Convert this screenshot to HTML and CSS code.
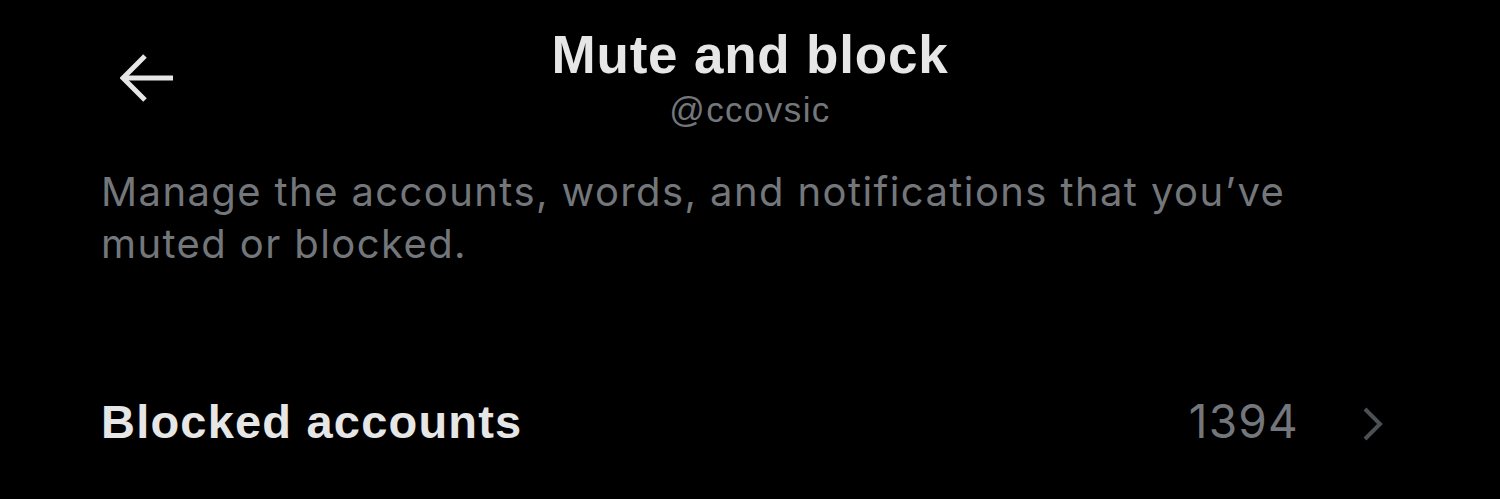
FILE: index.html
```html
<!DOCTYPE html>
<html lang="en">
<head>
<meta charset="utf-8">
<title>Mute and block</title>
<link rel="stylesheet" href="styles.css">
</head>
<body>
<div class="screen">
  <header class="topbar">
    <button class="back" aria-label="Back">
      <svg width="54" height="48" viewBox="0 0 54 48" fill="none" stroke="#e6e6e6" stroke-width="5" stroke-linejoin="miter">
        <path d="M25 2 L3 24 L25 46"/>
        <path d="M4 24 H53"/>
      </svg>
    </button>
    <div class="heading">
      <h1 class="title">Mute and block</h1>
      <div class="handle">@ccovsic</div>
    </div>
    <div class="spacer"></div>
  </header>

  <p class="intro">Manage the accounts, words, and notifications that you’ve muted or blocked.</p>

  <ul class="settings">
    <li class="row">
      <span class="row-label">Blocked accounts</span>
      <span class="row-count">1394</span>
      <svg class="chevron" width="22" height="34" viewBox="0 0 22 34" fill="none" stroke="#4d5053" stroke-width="4">
        <path d="M3 2 L18 17 L3 32"/>
      </svg>
    </li>
  </ul>
</div>
</body>
</html>
```
FILE: styles.css
```css
html, body {
  margin: 0;
  padding: 0;
  background: #000;
}

.screen {
  width: 1500px;
  height: 499px;
  overflow: hidden;
  background: #000;
  color: #e7e7e7;
  font-family: "Liberation Sans", Arial, sans-serif;
}

.topbar {
  display: grid;
  grid-template-columns: 1fr auto 1fr;
  padding-top: 25px;
}

.back {
  justify-self: start;
  align-self: start;
  margin: 29px 0 0 120px;
  padding: 0;
  border: 0;
  background: none;
  width: 54px;
  height: 48px;
  display: block;
}

.back svg {
  display: block;
}

.heading {
  display: flex;
  flex-direction: column;
  align-items: center;
}

.title {
  margin: 0;
  font-size: 53px;
  line-height: 60px;
  font-weight: 700;
  color: #e6e6e6;
  letter-spacing: 0.8px;
}

.handle {
  margin-top: 5px;
  font-size: 35px;
  line-height: 40px;
  color: #73777b;
  letter-spacing: 1.4px;
}

.intro {
  margin: 36px 0 0;
  padding: 0 130px 0 101px;
  font-family: "Inter", "Liberation Sans", sans-serif;
  font-size: 40px;
  line-height: 52px;
  color: #73777b;
  letter-spacing: 1.4px;
}

.settings {
  list-style: none;
  margin: 121px 0 0;
  padding: 0;
}

.row {
  display: flex;
  align-items: center;
  height: 60px;
  padding: 0 116px 0 101px;
}

.row-label {
  flex: 1;
  font-size: 47px;
  font-weight: 700;
  color: #e6e6e6;
  letter-spacing: 1.2px;
}

.row-count {
  font-family: "Inter", "Liberation Sans", sans-serif;
  font-size: 46px;
  color: #73777b;
  letter-spacing: 1.2px;
  margin-right: 63px;
}

.chevron {
  display: block;
  margin-top: 5px;
}
```
